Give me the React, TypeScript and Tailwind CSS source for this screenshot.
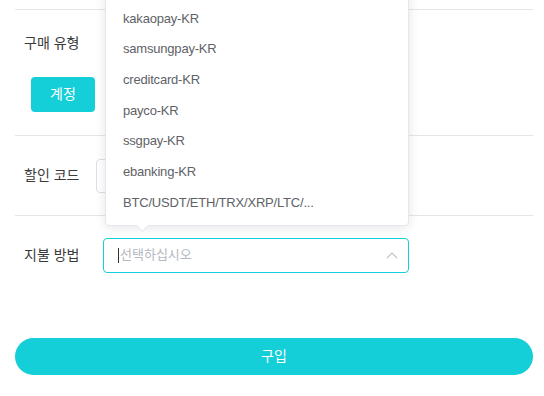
import React from "react";

const items = [
  "kakaopay-KR",
  "samsungpay-KR",
  "creditcard-KR",
  "payco-KR",
  "ssgpay-KR",
  "ebanking-KR",
  "BTC/USDT/ETH/TRX/XRP/LTC/...",
];

export default function App() {
  const font = { fontFamily: '"Liberation Sans", Arial, "Noto Sans CJK KR", sans-serif' };
  return (
    <div className="relative w-[544px] h-[396px] bg-white overflow-hidden" style={font}>
      <div className="px-[15px] pt-[9px] w-[548px]">
        <div className="border-t border-b border-[#e6e6e6] h-[127px] pl-[9px] pt-[23px]">
          <div className="text-[14px] leading-[20px] text-[#3a3a3a]">구매 유형</div>
          <div className="mt-[24px] ml-[7px] w-[64px] h-[35px] rounded-[4px] bg-[#14ced8] text-white text-[14px] flex items-center justify-center">
            계정
          </div>
        </div>
        <div className="border-b border-[#e6e6e6] h-[80px] pl-[9px] flex items-center">
          <div className="text-[14px] text-[#3a3a3a] w-[72px]">할인 코드</div>
          <div className="w-[312px] h-[34px] border border-[#dcdfe6] rounded-[4px]" />
        </div>
        <div className="h-[78px] pl-[9px] flex items-center">
          <div className="text-[14px] text-[#3a3a3a] w-[79px]">지불 방법</div>
          <div className="relative w-[306px] h-[35px] border border-[#14ced8] rounded-[4px] flex items-center pl-[14px]">
            <span className="w-px h-[15px] bg-[#333] mr-[1px]" />
            <span className="text-[13px] text-[#b4b8bf]">선택하십시오</span>
            <svg className="absolute right-[10px] top-[12px]" width="12" height="8" viewBox="0 0 12 8">
              <path d="M1 7 L6 2 L11 7" fill="none" stroke="#c0c4cc" strokeWidth="1.2" />
            </svg>
          </div>
        </div>
        <div className="mt-[44px] h-[37px] rounded-full bg-[#14ced8] text-white text-[14px] flex items-center justify-center">
          구입
        </div>
      </div>

      <div className="absolute left-[105px] top-[-8px] w-[304px] bg-white border border-[#e4e7ed] rounded-[4px] shadow-[0_2px_12px_0_rgba(0,0,0,0.1)] pt-[10px] pb-[7px]">
        {items.map((t) => (
          <div key={t} className="h-[30.67px] flex items-center pl-[17px] text-[13px] text-[#606266] tracking-[-0.2px]">
            {t}
          </div>
        ))}
        <div className="absolute left-[32px] bottom-[-5px] w-[9px] h-[9px] bg-white border-r border-b border-[#e4e7ed] rotate-45" />
      </div>
    </div>
  );
}
